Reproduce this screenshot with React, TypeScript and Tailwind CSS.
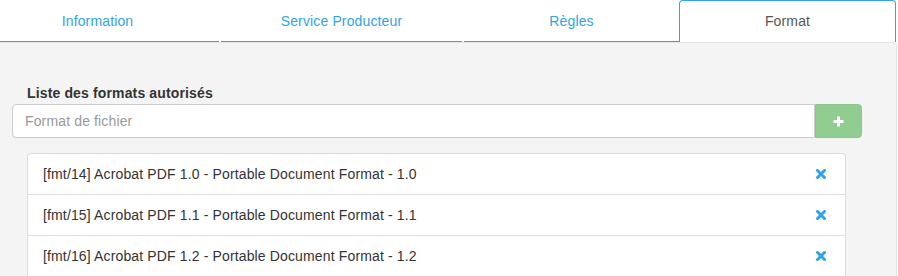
import React from 'react'

const tabs = [
    { label: 'Information', cls: 'w-[243px] -ml-[24px] mr-[2px]' },
    { label: 'Service Producteur', cls: 'w-[241px] mr-[2px]' },
    { label: 'Règles', cls: 'w-[215px]' },
]

const formats = [
    '[fmt/14] Acrobat PDF 1.0 - Portable Document Format - 1.0',
    '[fmt/15] Acrobat PDF 1.1 - Portable Document Format - 1.1',
    '[fmt/16] Acrobat PDF 1.2 - Portable Document Format - 1.2',
]

function RemoveIcon() {
    return (
        <svg width="10" height="10" viewBox="0 0 10 10" className="shrink-0">
            <path d="M1.5 1.5 L8.5 8.5 M8.5 1.5 L1.5 8.5" stroke="#2fa4e7" strokeWidth="3" strokeLinecap="square" />
        </svg>
    )
}

export default function App() {
    return (
        <div className="w-[898px] h-[276px] overflow-hidden bg-white font-['Liberation_Sans',Arial,sans-serif] text-[14px] leading-[20px] tracking-[0.14px]">
            {/* tabs */}
            <div className="flex h-[42px] bg-white">
                {tabs.map((t) => (
                    <div key={t.label} className={`${t.cls} h-[42px] pt-[11px] text-center text-[#2fa4e7] border-b border-[#2fa4e7]`}>
                        {t.label}
                    </div>
                ))}
                <div className="w-[217px] h-[42px] pt-[10px] text-center text-[#555] bg-white border border-b-0 border-[#2fa4e7] rounded-t-[4px]">
                    Format
                </div>
            </div>

            {/* panel */}
            <div className="w-[897px] h-[234px] bg-[#f4f4f4] border-r border-t border-[#e6e6e6] rounded-tr-[4px] pl-[12px] pt-[40px]">
                <div className="ml-[15px] mb-[1px] font-bold text-[#333]">Liste des formats autorisés</div>

                <div className="flex w-[850px] h-[34px]">
                    <div className="flex-1 flex items-center bg-white border border-[#ccc] rounded-l-[4px] px-[12px] text-[#999]">
                        Format de fichier
                    </div>
                    <div className="w-[47px] flex items-center justify-center bg-[#91cc91] border border-[#8ac78a] rounded-r-[4px]">
                        <svg width="11" height="11" viewBox="0 0 11 11">
                            <path d="M5.5 0.5 V10.5 M0.5 5.5 H10.5" stroke="#fff" strokeWidth="3" />
                        </svg>
                    </div>
                </div>

                <div className="ml-[15px] mt-[15px] w-[819px] bg-white border border-b-0 border-[#ddd] rounded-t-[4px]">
                    {formats.map((f) => (
                        <div key={f} className="flex items-center justify-between h-[41px] pl-[15px] pr-[19px] text-[#333] border-b border-[#ddd]">
                            <span>{f}</span>
                            <RemoveIcon />
                        </div>
                    ))}
                </div>
            </div>
        </div>
    )
}
